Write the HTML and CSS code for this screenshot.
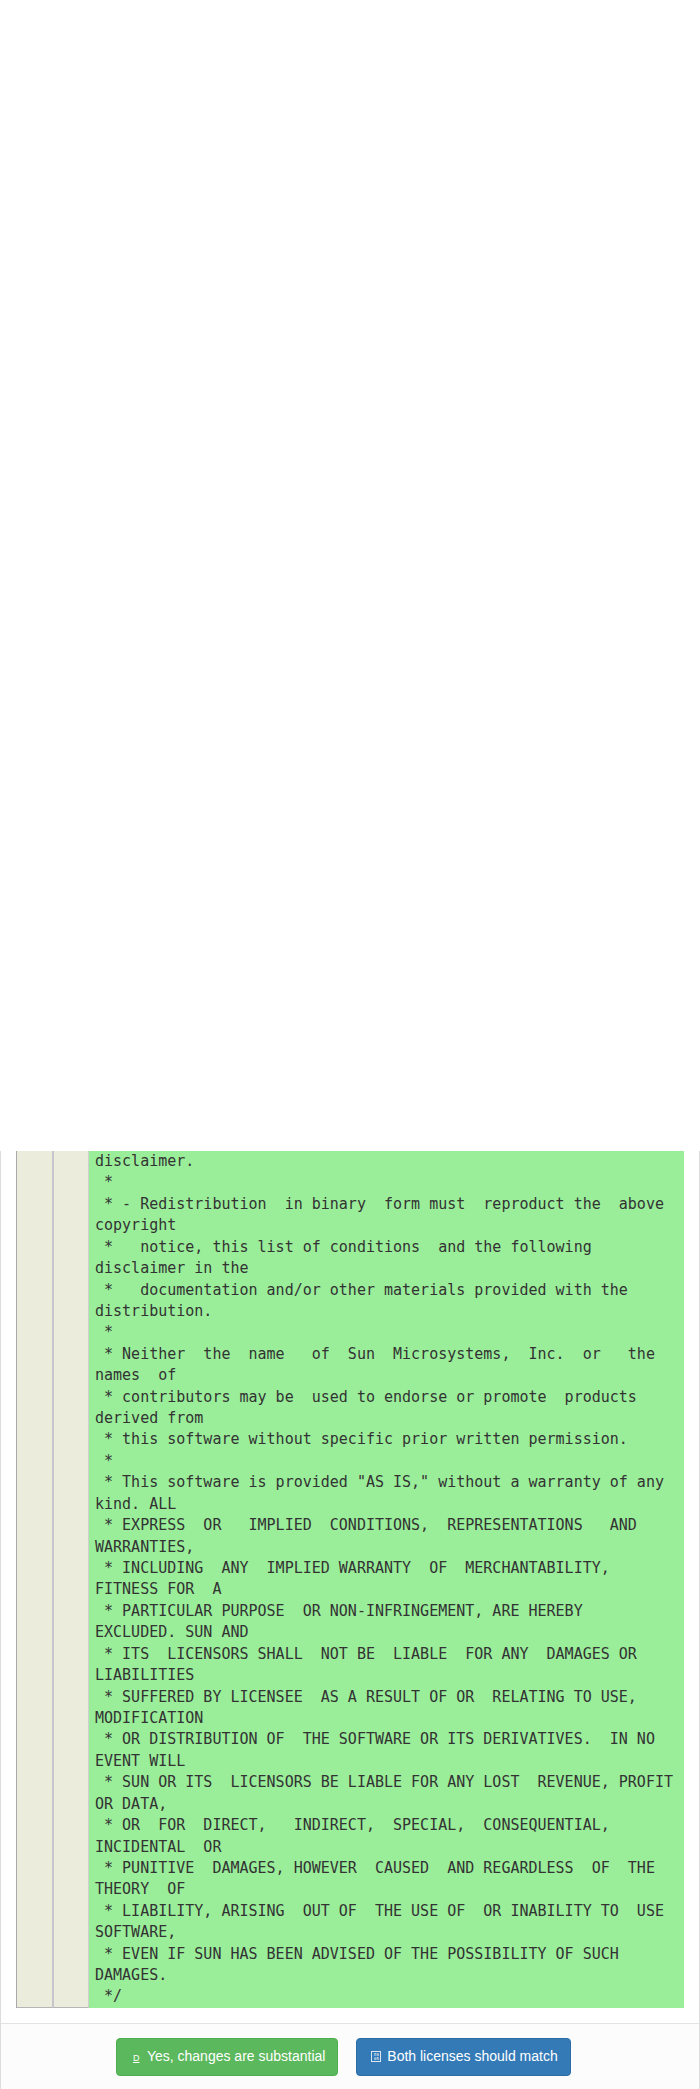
FILE: index.html
```html
<!DOCTYPE html>
<html>
<head>
<meta charset="utf-8">
<link rel="stylesheet" href="styles.css">
</head>
<body>
<div class="blank"></div>
<div class="panel">
  <div class="panel-body">
    <div class="diff">
      <div class="num num-a"></div>
      <div class="num num-b"></div>
      <pre class="code">disclaimer.
 *
 * - Redistribution  in binary  form must  reproduct the  above
copyright
 *   notice, this list of conditions  and the following
disclaimer in the
 *   documentation and/or other materials provided with the
distribution.
 *
 * Neither  the  name   of  Sun  Microsystems,  Inc.  or   the
names  of
 * contributors may be  used to endorse or promote  products
derived from
 * this software without specific prior written permission.
 *
 * This software is provided "AS IS," without a warranty of any
kind. ALL
 * EXPRESS  OR   IMPLIED  CONDITIONS,  REPRESENTATIONS   AND
WARRANTIES,
 * INCLUDING  ANY  IMPLIED WARRANTY  OF  MERCHANTABILITY,
FITNESS FOR  A
 * PARTICULAR PURPOSE  OR NON-INFRINGEMENT, ARE HEREBY
EXCLUDED. SUN AND
 * ITS  LICENSORS SHALL  NOT BE  LIABLE  FOR ANY  DAMAGES OR
LIABILITIES
 * SUFFERED BY LICENSEE  AS A RESULT OF OR  RELATING TO USE,
MODIFICATION
 * OR DISTRIBUTION OF  THE SOFTWARE OR ITS DERIVATIVES.  IN NO
EVENT WILL
 * SUN OR ITS  LICENSORS BE LIABLE FOR ANY LOST  REVENUE, PROFIT
OR DATA,
 * OR  FOR  DIRECT,   INDIRECT,  SPECIAL,  CONSEQUENTIAL,
INCIDENTAL  OR
 * PUNITIVE  DAMAGES, HOWEVER  CAUSED  AND REGARDLESS  OF  THE
THEORY  OF
 * LIABILITY, ARISING  OUT OF  THE USE OF  OR INABILITY TO  USE
SOFTWARE,
 * EVEN IF SUN HAS BEEN ADVISED OF THE POSSIBILITY OF SUCH
DAMAGES.
 */</pre>
    </div>
  </div>
  <div class="panel-footer">
    <button class="btn btn-success" type="button"><span class="ico ico-d">D</span> Yes, changes are substantial</button>
    <button class="btn btn-primary" type="button"><span class="ico"><span class="tofu"><span>E0</span><span>65</span></span></span> Both licenses should match</button>
  </div>
</div>
</body>
</html>
```
FILE: styles.css
```css
html, body {
  margin: 0;
  padding: 0;
  background: #ffffff;
}

body {
  font-family: "Liberation Sans", Arial, sans-serif;
  font-size: 14px;
  color: #333333;
}

.blank {
  height: 1151px;
}

.panel {
  border: 1px solid #dddddd;
  border-top: none;
  border-radius: 0 0 4px 4px;
  background: #ffffff;
}

.panel-body {
  padding: 0 15px 15px 15px;
}

.diff {
  display: grid;
  grid-template-columns: 37px 35px 1fr;
  border-left: 1px solid #a9a9a9;
}

.num {
  background: #ececdd;
  border-bottom: 1px solid #b5b5b5;
}

.num-a {
  border-right: 2px solid #c6c6ce;
}

.num-b {
  border-right: 1px solid #cfcfcf;
}

.code {
  margin: 0;
  padding: 0 0 0 6px;
  background: #9aee9a;
  font-family: "DejaVu Sans Mono", monospace;
  font-size: 15px;
  line-height: 1.428571;
  color: #333333;
  white-space: pre;
  overflow: hidden;
}

.panel-footer {
  display: flex;
  justify-content: center;
  gap: 18px;
  padding: 14px 28px 14px 15px;
  border-top: 1px solid #e3e3e3;
  background: #fcfcfc;
  border-radius: 0 0 4px 4px;
}

.btn {
  display: inline-flex;
  align-items: center;
  padding: 6px 12px;
  font-family: "Liberation Sans", Arial, sans-serif;
  font-size: 14px;
  line-height: 21px;
  color: #ffffff;
  border: 1px solid transparent;
  border-radius: 4px;
  white-space: pre;
  cursor: pointer;
}

.btn-success {
  background: #5cb85c;
  border-color: #4cae4c;
}

.btn-primary {
  background: #337ab7;
  border-color: #2e6da4;
}

.ico {
  display: inline-flex;
  justify-content: center;
  align-items: center;
  width: 14px;
  height: 21px;
}

.ico-d {
  font-size: 9px;
  text-decoration: underline;
  padding-top: 3px;
}

.tofu {
  display: inline-flex;
  flex-direction: column;
  justify-content: center;
  width: 10px;
  height: 11px;
  border: 1px solid #d9e6f2;
  box-sizing: border-box;
  font-family: "DejaVu Sans Mono", monospace;
  font-size: 4px;
  line-height: 4px;
  text-align: center;
  color: #ffffff;
}
```
